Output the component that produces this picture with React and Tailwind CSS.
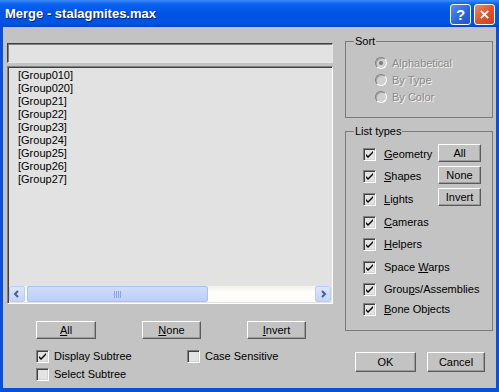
import React from 'react';

const groups = ['[Group010]', '[Group020]', '[Group21]', '[Group22]', '[Group23]', '[Group24]', '[Group25]', '[Group26]', '[Group27]'];

const listTypes = [
  { pre: '', key: 'G', post: 'eometry', mt: 'mt-0' },
  { pre: '', key: 'S', post: 'hapes', mt: 'mt-[9px]' },
  { pre: '', key: 'L', post: 'ights', mt: 'mt-[10px]' },
  { pre: '', key: 'C', post: 'ameras', mt: 'mt-[10px]' },
  { pre: '', key: 'H', post: 'elpers', mt: 'mt-[9px]' },
  { pre: 'Space ', key: 'W', post: 'arps', mt: 'mt-[10px]' },
  { pre: 'Grou', key: 'p', post: 's/Assemblies', mt: 'mt-[9px]' },
  { pre: '', key: 'B', post: 'one Objects', mt: 'mt-[7px]' }
];

function CheckBox({ checked }) {
  return (
    <div className="relative h-[13px] w-[13px] shrink-0 border border-b-white border-l-[#808080] border-r-white border-t-[#808080] bg-[#e3e3e3] shadow-[inset_1px_1px_0_#404040,inset_-1px_-1px_0_#d4d4d4]">
      {checked && (
        <svg viewBox="0 0 11 11" className="absolute left-0 top-0 h-[11px] w-[11px]">
          <path d="M2 5 L4 7 L9 2 L9 4 L4 9 L2 7 Z" fill="#000" />
        </svg>
      )}
    </div>
  );
}

function Radio({ on }) {
  return (
    <div className="relative h-[12px] w-[12px] shrink-0 rounded-full border border-b-white border-l-[#808080] border-r-white border-t-[#808080] bg-[#d0d0d0] shadow-[inset_1px_1px_0_#a8a8a8]">
      {on && <div className="absolute left-[3px] top-[3px] h-[4px] w-[4px] rounded-full bg-[#7a7a7a]" />}
    </div>
  );
}

function Button({ children, className = '' }) {
  return (
    <div className={`flex items-center justify-center border border-b-[#5a5a5a] border-l-white border-r-[#5a5a5a] border-t-white bg-[#c3c3c3] text-[11px] leading-none text-black shadow-[inset_-1px_-1px_0_#9a9a9a] ${className}`}>
      {children}
    </div>
  );
}

function GroupBox({ label, className = '', children }) {
  return (
    <div className={`relative border border-[#7a7a7a] ${className}`}>
      <span className="absolute left-[8px] top-[-8px] bg-[#c3c3c3] px-[1px] text-[11px] leading-[14px] text-black">{label}</span>
      {children}
    </div>
  );
}

function ScrollBar() {
  return (
    <div className="flex h-[16px] items-stretch bg-[linear-gradient(to_bottom,#f3f1ea,#fefefb_40%,#fbfaf5)]">
      <div className="flex w-[16px] items-center justify-center rounded-[2px] border border-[#b9cdf6] bg-[linear-gradient(to_bottom,#dbe6fd,#c3d4fb)]">
        <svg viewBox="0 0 8 8" className="h-[8px] w-[8px]">
          <path d="M5 1 L2 4 L5 7" stroke="#4d6185" strokeWidth="2" fill="none" />
        </svg>
      </div>
      <div className="ml-[2px] flex w-[181px] items-center justify-center rounded-[2px] border border-[#a9c0f3] bg-[linear-gradient(to_bottom,#cfdcfd,#bccffb)]">
        <div className="flex gap-[1px]">
          {[0, 1, 2, 3].map((i) => (
            <div key={i} className="h-[7px] w-[1px] bg-[#8aa6e9]" />
          ))}
        </div>
      </div>
      <div className="flex-1" />
      <div className="flex w-[16px] items-center justify-center rounded-[2px] border border-[#b9cdf6] bg-[linear-gradient(to_bottom,#dbe6fd,#c3d4fb)]">
        <svg viewBox="0 0 8 8" className="h-[8px] w-[8px]">
          <path d="M3 1 L6 4 L3 7" stroke="#4d6185" strokeWidth="2" fill="none" />
        </svg>
      </div>
    </div>
  );
}

export default function App() {
  return (
    <div className="flex h-[392px] w-[499px] flex-col bg-[#0a4fdc] font-['Liberation_Sans',Arial,sans-serif]">
      <div className="flex h-[27px] shrink-0 items-center bg-[linear-gradient(to_bottom,#3d8af7_0%,#0a62ef_15%,#0055e5_45%,#0054e3_85%,#0047cc_100%)] pl-[5px] pr-[4px]">
        <span className="text-[13px] font-bold text-white [text-shadow:1px_1px_0_#0a1f6e]">Merge - stalagmites.max</span>
        <div className="ml-auto flex gap-[3px] pt-[1px]">
          <div className="flex h-[21px] w-[21px] items-center justify-center rounded-[3px] border border-white bg-[linear-gradient(135deg,#5b8ef5,#2663e0_60%,#1b55d0)] text-[15px] font-bold leading-none text-white">?</div>
          <div className="flex h-[21px] w-[21px] items-center justify-center rounded-[3px] border border-white bg-[linear-gradient(135deg,#f08a64,#e0512d_55%,#c8401e)]">
            <svg viewBox="0 0 12 12" className="h-[11px] w-[11px]">
              <path d="M2 2 L10 10 M10 2 L2 10" stroke="#fff" strokeWidth="2" />
            </svg>
          </div>
        </div>
      </div>

      <div className="mx-[3px] mb-[4px] flex flex-1 bg-[#c3c3c3]">
        <div className="flex w-[330px] flex-col pl-[4px] pt-[16px]">
          <div className="h-[20px] w-[326px] border border-b-[#e6e6e6] border-l-[#404040] border-r-[#e6e6e6] border-t-[#404040] bg-[#e2e2e2] shadow-[inset_1px_1px_0_#808080]" />
          <div className="mt-[3px] flex h-[238px] w-[326px] flex-col border border-b-white border-l-[#808080] border-r-white border-t-[#808080] bg-[#e2e2e2] shadow-[inset_1px_1px_0_#404040]">
            <div className="flex-1 pl-[10px] pt-[2px] text-[11px] leading-[13px] text-black">
              {groups.map((g) => (
                <div key={g}>{g}</div>
              ))}
            </div>
            <div className="mb-[1px] ml-[1px] mr-[1px]">
              <ScrollBar />
            </div>
          </div>

          <div className="mt-[17px] flex pl-[29px]">
            <Button className="h-[18px] w-[60px]"><span><u>A</u>ll</span></Button>
            <Button className="ml-[46px] h-[18px] w-[59px]"><span><u>N</u>one</span></Button>
            <Button className="ml-[46px] h-[18px] w-[59px]"><span><u>I</u>nvert</span></Button>
          </div>

          <div className="mt-[11px] flex pl-[29px] text-[11px] leading-[13px] text-black">
            <div className="flex w-[151px] flex-col gap-[5px]">
              <div className="flex items-center gap-[5px]"><CheckBox checked /><span>Display Subtree</span></div>
              <div className="flex items-center gap-[5px]"><CheckBox /><span>Select Subtree</span></div>
            </div>
            <div className="flex items-center gap-[5px] self-start"><CheckBox /><span>Case Sensitive</span></div>
          </div>
        </div>

        <div className="ml-[12px] flex w-[148px] flex-col pt-[14px]">
          <GroupBox label="Sort" className="h-[77px] pl-[29px] pt-[15px]">
            <div className="flex flex-col gap-[5px] text-[11px] leading-[12px] text-[#8a8a8a] [text-shadow:1px_1px_0_#f4f4f4]">
              <div className="flex items-center gap-[5px]"><Radio on /><span>Alphabetical</span></div>
              <div className="flex items-center gap-[5px]"><Radio /><span>By Type</span></div>
              <div className="flex items-center gap-[5px]"><Radio /><span>By Color</span></div>
            </div>
          </GroupBox>

          <GroupBox label="List types" className="mt-[13px] flex h-[200px] pl-[17px]">
            <div className="flex w-[75px] flex-col pt-[16px] text-[11px] leading-[13px] text-black">
              {listTypes.map((t) => (
                <div key={t.key} className={`flex items-center gap-[8px] whitespace-nowrap ${t.mt}`}>
                  <CheckBox checked />
                  <span>{t.pre}<u>{t.key}</u>{t.post}</span>
                </div>
              ))}
            </div>
            <div className="flex flex-col gap-[4px] pt-[12px]">
              <Button className="h-[18px] w-[43px]">All</Button>
              <Button className="h-[18px] w-[43px]">None</Button>
              <Button className="h-[18px] w-[43px]">Invert</Button>
            </div>
          </GroupBox>

          <div className="mt-[21px] flex pl-[10px]">
            <Button className="h-[20px] w-[61px]">OK</Button>
            <Button className="ml-[11px] h-[20px] w-[58px]">Cancel</Button>
          </div>
        </div>
      </div>
    </div>
  );
}
